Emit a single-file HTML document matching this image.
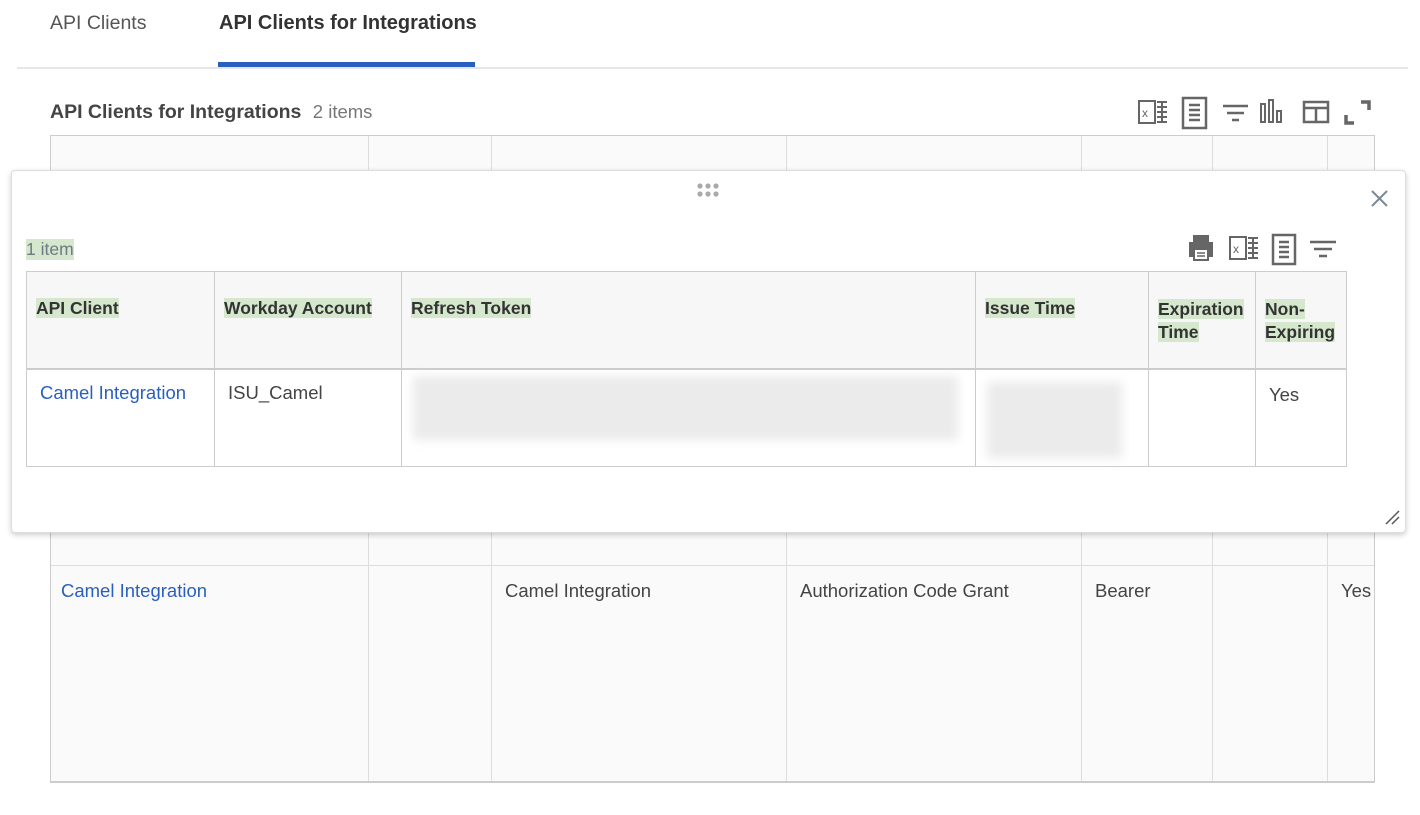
<!DOCTYPE html>
<html><head><style>
body{margin:0;width:1420px;height:815px;background:#fff;font-family:"Liberation Sans",sans-serif;position:relative;overflow:hidden;color:#333}
.a{position:absolute}
.hl{background:#d5e8cd}
.lnk{color:#2a5fbd}
.vl{position:absolute;top:0;bottom:0;width:1px;background:#ddd}
</style></head><body>
<div class="a" style="left:50px;top:12px;font-size:19.5px;color:#555">API Clients</div>
<div class="a" style="left:219px;top:12px;font-size:20px;font-weight:bold;color:#333">API Clients for Integrations</div>
<div class="a" style="left:17px;top:67px;width:1391px;height:2px;background:#e6e6e6"></div>
<div class="a" style="left:218px;top:62px;width:257px;height:5px;background:#2a5fbd"></div>
<div class="a" style="left:50px;top:101px;font-size:19.5px;font-weight:bold;color:#444">API Clients for Integrations <span style="font-weight:normal;color:#777;font-size:18.5px;margin-left:6px">2 items</span></div>
<svg class="a" style="left:1135px;top:96px" width="240" height="34" fill="none" stroke="#666" stroke-width="2">
<rect x="4" y="5" width="16" height="22"/><text x="7" y="21" font-size="12" fill="#666" stroke="none" font-family="Liberation Sans">x</text><path d="M22 6h10M22 11h10M22 16h10M22 21h10M22 26h10M27 5v22"/>
<rect x="48" y="2" width="23" height="30" stroke-width="2.5"/><path d="M54 9h11M54 14h11M54 19h11M54 24h11" stroke-width="2.5"/>
<path d="M88 10h25M92 17h17M97 24h7" stroke-width="2.5"/>
<rect x="126" y="8" width="4" height="18"/><rect x="134" y="4" width="4" height="22"/><rect x="142" y="15" width="4" height="11"/>
<rect x="169" y="6" width="24" height="20" stroke-width="2.5"/><path d="M169 12h24M181 12v14" stroke-width="2.5"/>
<path d="M211 19v8h8M226 6h8v8" stroke-width="3.5"/>
</svg>
<div class="a" style="left:50px;top:135px;width:1325px;height:648px;border:1px solid #ccc;border-bottom:2px solid #ccc;background:#fafafa;box-sizing:border-box">
<div class="vl" style="left:317px"></div><div class="vl" style="left:440px"></div><div class="vl" style="left:735px"></div><div class="vl" style="left:1030px"></div><div class="vl" style="left:1161px"></div><div class="vl" style="left:1276px"></div>
<div class="a" style="left:0;right:0;top:429px;height:1px;background:#ddd"></div>
<div class="a lnk" style="left:10px;top:444px;font-size:18.5px">Camel Integration</div>
<div class="a" style="left:454px;top:444px;font-size:18.5px;color:#444">Camel Integration</div>
<div class="a" style="left:749px;top:444px;font-size:18.5px;color:#444">Authorization Code Grant</div>
<div class="a" style="left:1044px;top:444px;font-size:18.5px;color:#444">Bearer</div>
<div class="a" style="left:1290px;top:444px;font-size:18.5px;color:#444">Yes</div>
</div>
<div class="a" style="left:11px;top:170px;width:1395px;height:363px;background:#fff;border:1px solid #ddd;border-radius:4px;box-shadow:0 2px 6px rgba(0,0,0,.2);box-sizing:border-box">
<svg class="a" style="left:683px;top:10px" width="30" height="20" fill="#aaa"><circle cx="5" cy="5" r="2.6"/><circle cx="13" cy="5" r="2.6"/><circle cx="21" cy="5" r="2.6"/><circle cx="5" cy="13" r="2.6"/><circle cx="13" cy="13" r="2.6"/><circle cx="21" cy="13" r="2.6"/></svg>
<svg class="a" style="left:1358px;top:18px" width="20" height="20" stroke="#7a8a94" stroke-width="2"><path d="M2 2l15 15M17 2L2 17"/></svg>
<div class="a hl" style="left:14px;top:68px;font-size:17.5px;color:#6b7a84">1 item</div>
<svg class="a" style="left:1172px;top:60px" width="160" height="36" fill="none" stroke="#666" stroke-width="2">
<path d="M6 12h22v13H6z" fill="#666"/><rect x="10" y="5" width="14" height="6" fill="#666"/><rect x="10" y="18" width="14" height="11" fill="#fff" stroke="#666"/><path d="M13 22h8M13 25h8" stroke-width="1.5"/>
<rect x="46" y="6" width="16" height="22"/><text x="49" y="22" font-size="12" fill="#666" stroke="none" font-family="Liberation Sans">x</text><path d="M64 7h10M64 12h10M64 17h10M64 22h10M64 27h10M69 6v22"/>
<rect x="89" y="4" width="22" height="29" stroke-width="2.5"/><path d="M95 11h10M95 16h10M95 21h10M95 26h10" stroke-width="2.5"/>
<path d="M126 11h26M130 18h18M135 25h8" stroke-width="2.5"/>
</svg>
<div class="a" style="left:14px;top:100px;width:1321px;height:196px;border:1px solid #ccc;box-sizing:border-box">
<div class="a" style="left:0;right:0;top:0;height:96px;background:#f7f7f7;border-bottom:2px solid #ccc"></div>
<div class="vl" style="left:187px;background:#ccc"></div><div class="vl" style="left:374px;background:#ccc"></div><div class="vl" style="left:948px;background:#ccc"></div><div class="vl" style="left:1121px;background:#ccc"></div><div class="vl" style="left:1228px;background:#ccc"></div>
<div class="a" style="top:26px;left:9px;font-size:17.5px;font-weight:bold"><span class="hl">API Client</span></div>
<div class="a" style="top:26px;left:197px;font-size:17.5px;font-weight:bold"><span class="hl">Workday Account</span></div>
<div class="a" style="top:26px;left:384px;font-size:17.5px;font-weight:bold"><span class="hl">Refresh Token</span></div>
<div class="a" style="top:26px;left:958px;font-size:17.5px;font-weight:bold"><span class="hl">Issue Time</span></div>
<div class="a" style="top:26px;left:1131px;font-size:17.5px;font-weight:bold;line-height:23px"><span class="hl">Expiration</span><br><span class="hl">Time</span></div>
<div class="a" style="top:26px;left:1238px;font-size:17.5px;font-weight:bold;line-height:23px"><span class="hl">Non-</span><br><span class="hl">Expiring</span></div>
<div class="a lnk" style="top:110px;left:13px;font-size:18.5px">Camel Integration</div>
<div class="a" style="top:110px;left:201px;font-size:18.5px;color:#444">ISU_Camel</div>
<div class="a" style="top:104px;left:386px;width:545px;height:64px;background:#ebebeb;filter:blur(5px)"></div>
<div class="a" style="top:110px;left:960px;width:135px;height:76px;background:#ebebeb;filter:blur(5px)"></div>
<div class="a" style="top:112px;left:1242px;font-size:18.5px;color:#444">Yes</div>
</div>
<svg class="a" style="left:1372px;top:338px" width="18" height="18" stroke="#555" stroke-width="1.5"><path d="M2 15L15 2M8 15L15 8"/></svg>
</div>
</body></html>
